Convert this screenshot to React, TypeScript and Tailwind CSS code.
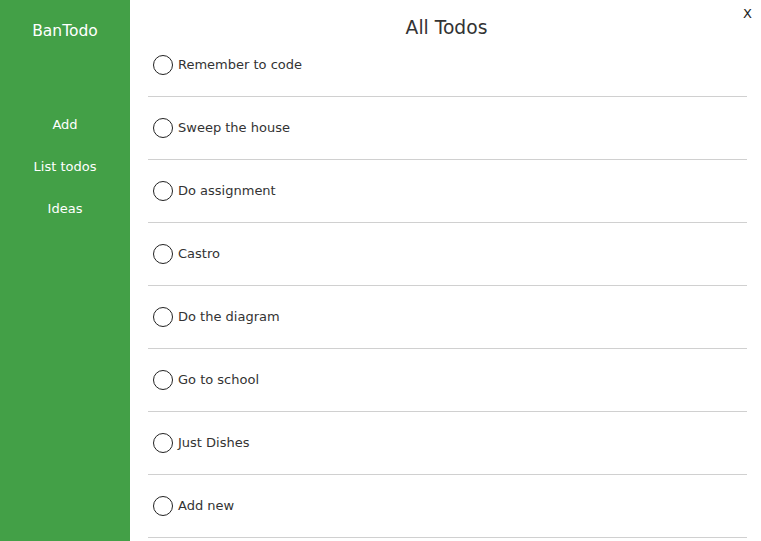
import React from "react";

const todos = [
  "Remember to code",
  "Sweep the house",
  "Do assignment",
  "Castro",
  "Do the diagram",
  "Go to school",
  "Just Dishes",
  "Add new",
];

export default function App() {
  return (
    <div
      className="flex w-[761px] h-[541px] overflow-hidden bg-white text-[#333]"
      style={{ fontFamily: '"DejaVu Sans", sans-serif' }}
    >
      <aside className="w-[130px] shrink-0 bg-[#43a047] text-white flex flex-col items-center">
        <div className="mt-[21px] h-[20px] leading-[20px] text-[15.5px]">BanTodo</div>
        <nav className="mt-[74px] flex flex-col items-center gap-[22px] text-[13px]">
          <div className="h-[20px] leading-[20px]">Add</div>
          <div className="h-[20px] leading-[20px]">List todos</div>
          <div className="h-[20px] leading-[20px]">Ideas</div>
        </nav>
      </aside>
      <main className="relative flex-1 pl-[18px] pr-[14px]">
        <div className="absolute right-[9px] top-[4px] text-[13px] text-[#222]">X</div>
        <h1 className="h-[34px] pt-[17px] pr-[2px] text-center text-[18.7px] leading-[22px] text-[#333]">
          All Todos
        </h1>
        <ul>
          {todos.map((t) => (
            <li
              key={t}
              className="h-[63px] border-b border-[#d0d0d0] flex items-start pt-[21px] pl-[5px]"
            >
              <span className="w-[20px] h-[20px] rounded-full border-[1.5px] border-[#222] shrink-0" />
              <span className="ml-[5px] text-[13px] leading-[20px]">{t}</span>
            </li>
          ))}
        </ul>
      </main>
    </div>
  );
}
